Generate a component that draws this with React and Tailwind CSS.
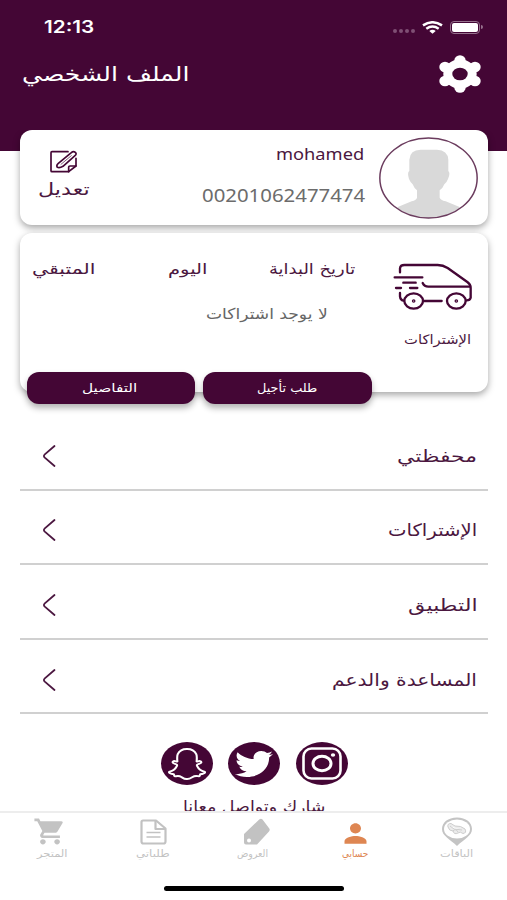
import { useLayoutEffect, useRef, useState } from 'react'
import { FaSnapchatGhost, FaTwitter } from 'react-icons/fa'
import { MdPerson, MdShoppingCart } from 'react-icons/md'

const menu = [
  { label: 'محفظتي', width: 80 },
  { label: 'الإشتراكات', width: 89 },
  { label: 'التطبيق', width: 69 },
  { label: 'المساعدة والدعم', width: 145 },
]

// Single line of text stretched to a given width
function Line({ width, className = '', children }) {
  const ref = useRef(null)
  const [scale, setScale] = useState(1)

  useLayoutEffect(() => {
    setScale(width / ref.current.offsetWidth)
  }, [width])

  return (
    <span className={`block shrink-0 ${className}`} style={{ width }} dir="ltr">
      <span ref={ref} className="inline-block whitespace-nowrap origin-left" style={{ transform: `scaleX(${scale})` }}>
        {children}
      </span>
    </span>
  )
}

function StatusBar() {
  return (
    <div className="flex items-center justify-between pl-11 pr-[24px] h-[54px]" dir="ltr">
      <Line width={50} className="font-['Inter'] font-semibold text-[17px] leading-5">12:13</Line>
      <div className="flex items-center">
        <div className="flex gap-[2px] mt-2 mr-[7px]">
          {[0, 1, 2, 3].map((i) => (
            <i key={i} className="w-1 h-1 rounded-full bg-[#7f5074]" />
          ))}
        </div>
        <svg className="w-[21px] h-[13px] mr-[7px]" viewBox="0 0 21 13" preserveAspectRatio="none" fill="none" stroke="#fff" strokeWidth="2.5">
          <path d="M1 4.4Q10.500 -1.900 20 4.400" />
          <path d="M4.300 7.700Q10.500 3.400 16.700 7.700" />
          <path d="M7.300 10Q10.500 7.700 13.700 10L10.500 12.700Z" fill="#fff" stroke="none" />
        </svg>
        <div className="w-[30px] h-[13px] rounded-[4px] border border-[#96718d] p-px">
          <div className="w-full h-full rounded-[2px] bg-white" />
        </div>
        <i className="w-[2px] h-1 ml-px rounded-r-full bg-[#96718d]" />
      </div>
    </div>
  )
}

function GearIcon() {
  return (
    <svg className="w-[42px] h-[38px]" viewBox="0 0 42 38" fill="#fff">
      <ellipse cx="21" cy="19" rx="16.700" ry="14.500" />
      <ellipse cx="21" cy="5.500" rx="5.700" ry="5.200" />
      <ellipse cx="21" cy="32.500" rx="5.700" ry="5.200" />
      <ellipse cx="6" cy="12" rx="5.700" ry="5.200" />
      <ellipse cx="36" cy="12" rx="5.700" ry="5.200" />
      <ellipse cx="6" cy="26" rx="5.700" ry="5.200" />
      <ellipse cx="36" cy="26" rx="5.700" ry="5.200" />
      <ellipse cx="21" cy="19" rx="7.700" ry="6.300" fill="#440635" />
    </svg>
  )
}

function EditIcon() {
  return (
    <svg className="w-[27px] h-[23px]" viewBox="0 0 81 69" fill="none" stroke="#440635" strokeWidth="5" strokeLinejoin="round" strokeLinecap="round">
      <path d="M54 5H6Q3 5 3 8V62Q3 65 6 65H56L78 48V25" />
      <path d="M56 65V51Q56 48 60 48H78" />
      <path d="M64 8Q70 2 76 7Q81 12 75 17L39 49Q29 55 22 52Q18 46 25 40Z" />
      <path d="M33 43L64 17" strokeWidth="2" />
    </svg>
  )
}

function Avatar() {
  return (
    <svg className="w-[99px] h-[82px]" viewBox="0 0 297 246">
      <defs>
        <clipPath id="face">
          <ellipse cx="148.500" cy="123" rx="145" ry="119" />
        </clipPath>
      </defs>
      <ellipse cx="148.500" cy="123" rx="146" ry="120" fill="#fff" />
      <path clipPath="url(#face)" fill="#d9d9d9" d="M91 68Q93 38 125 38H174Q206 39 208 68V102Q215 108 207 126Q203 137 196 142Q191 155 182 160V182Q184 189 200 193L240 209L260 246H35L58 209L98 193Q113 189 114 182V160Q105 153 101 142Q94 136 90 126Q84 106 91 102Z" />
      <ellipse cx="148.500" cy="123" rx="146" ry="120" fill="none" stroke="#6b3c5e" strokeWidth="4.500" />
    </svg>
  )
}

function VanIcon() {
  return (
    <svg className="w-[80px] h-[48px]" viewBox="422 98 240 144" fill="none" stroke="#440635" strokeWidth="7" strokeLinecap="round" strokeLinejoin="round">
      <path d="M443 126V114Q444 104 456 104H556Q572 104 586 113L645 155Q655 162 655 172V202Q653 210 643 210" />
      <path d="M427 141H510M453 157H490M431 173H446M473 173H495" />
      <path d="M511 158Q516 169 528 169H653" />
      <path d="M443 188V198Q444 210 455 211M514 212H568" />
      <ellipse cx="484" cy="212" rx="28" ry="23" />
      <ellipse cx="612" cy="212" rx="28" ry="23" />
      <circle cx="484" cy="212" r="2" />
      <circle cx="612" cy="212" r="2" />
    </svg>
  )
}

function Chevron() {
  return (
    <svg className="w-[14px] h-[24px]" viewBox="0 0 14 24" fill="none" stroke="#4b1740" strokeWidth="1.800" strokeLinecap="round">
      <path d="M12.500 2L2.800 10.300Q1 12 2.800 13.700L12.500 22" />
    </svg>
  )
}

function InstagramIcon() {
  return (
    <svg className="w-[40px] h-[33px]" viewBox="0 0 40 33" fill="none" stroke="#fff">
      <rect x="1.500" y="1.500" width="37" height="30" rx="8" strokeWidth="2.600" />
      <ellipse cx="20" cy="16.500" rx="9" ry="7.300" strokeWidth="3" />
      <ellipse cx="31" cy="8" rx="2.200" ry="1.800" fill="#fff" stroke="none" />
    </svg>
  )
}

function TagIcon() {
  return (
    <svg className="w-[26px] h-[28px]" viewBox="0 0 26 28" fill="#c2c2c2">
      <path fillRule="evenodd" d="M15.500 1.300Q17 0 18.500 1.500L25.300 10.500Q26.300 12 25 13.500L13 26.500H2Q0 26.500 0 24.500V16ZM5 20.500A2 2 0 1 0 5 24.500A2 2 0 1 0 5 20.500Z" />
    </svg>
  )
}

function DocIcon() {
  return (
    <svg className="w-[27px] h-[26px]" viewBox="0 0 27 26" fill="none" stroke="#c2c2c2" strokeWidth="2.200" strokeLinejoin="round">
      <path d="M3 1.500H16L25.500 9.500V22.500Q25.500 24.500 23.500 24.500H3.500Q1.500 24.500 1.500 22.500V3Q1.500 1.500 3 1.500Z" />
      <path d="M15.500 2V10H25" />
      <path d="M6.500 13.500H20.500M6.500 18H20.500" strokeWidth="1.300" />
    </svg>
  )
}

function PinIcon() {
  return (
    <svg className="w-[32px] h-[30px]" viewBox="0 0 32 30">
      <path d="M16 0.500C7 0.500 1 5.500 1 12C1 19 9 22 16 29C23 22 31 19 31 12C31 5.500 25 .500 16 .500Z" fill="#c4c4c4" />
      <ellipse cx="16" cy="12" rx="13" ry="9.600" fill="#fff" />
      <path d="M7 10Q6 6.500 10 6.500L14 9Q20 8.500 24 12Q26 16 22 16.500Q19 14 17 16Q13 18 12 14Q8 14 7 10ZM9 9L13 12L21 13M12 14Q15 11 17 15" fill="#ececec" stroke="#cdcdcd" strokeWidth="1" />
    </svg>
  )
}

function Tab({ icon, label, width, active, className = '', labelClass = '' }) {
  return (
    <div className={`flex flex-col items-center ${active ? 'text-[#de8652]' : 'text-[#c3c3c3]'} ${className}`}>
      <div className="h-[31px] flex items-center justify-center">{icon}</div>
      <Line width={width} className={`text-[10px] leading-[14px] ${labelClass}`}>{label}</Line>
    </div>
  )
}

export default function App() {
  return (
    <div dir="rtl" className="w-[507px] h-[900px] flex flex-col overflow-hidden bg-white text-[#4b1740] font-['DejaVu_Sans',sans-serif]">
      <header className="h-[151px] shrink-0 bg-[#440635] text-white">
        <StatusBar />
        <div className="flex items-center justify-between h-10 pr-[26px] pl-[22px]">
          <GearIcon />
          <Line width={167} className="text-[20px] leading-8">الملف الشخصي</Line>
        </div>
      </header>

      <main className="relative flex-1 min-h-0 overflow-hidden -mt-[21px] px-5 pr-[19px]">
        {/* Profile */}
        <section className="flex h-[95px] rounded-[12px] bg-white shadow-[0_3px_7px_rgba(0,0,0,0.35)] pr-[10px] pl-[18px]">
          <div className="pt-[7px]"><Avatar /></div>
          <div className="flex-1 flex flex-col pr-[15px] pt-[12px] gap-[17px]">
            <Line width={88} className="font-['Noto_Sans'] text-[17px] leading-6">mohamed</Line>
            <Line width={163} className="font-['Noto_Sans'] text-[18px] leading-6 mr-[-1px] text-[#6c6c6c]">00201062477474</Line>
          </div>
          <div className="flex flex-col items-center pt-5">
            <EditIcon />
            <Line width={51} className="text-[17px] leading-6 mt-[4px]">تعديل</Line>
          </div>
        </section>

        {/* Subscription */}
        <section className="relative h-[159px] mt-2 rounded-[12px] bg-white shadow-[0_3px_7px_rgba(0,0,0,0.35)] flex">
          <div className="w-[108px] pr-[15px] pt-[30px]">
            <VanIcon />
            <Line width={67} className="text-[13px] leading-5 mt-[19px] mr-[2px]">الإشتراكات</Line>
          </div>
          <div className="flex-1 pt-[24px] pr-[25px] pl-[12px]">
            <div className="flex text-[15px] leading-6">
              <Line width={86}>تاريخ البداية</Line>
              <Line width={39} className="mr-[62px]">اليوم</Line>
              <Line width={64} className="mr-[72px]">المتبقي</Line>
            </div>
            <Line width={122} className="text-[15px] leading-6 mt-[21px] mr-[27px] text-[#666]">لا يوجد اشتراكات</Line>
          </div>
          <div className="absolute left-[7px] top-[139px] flex gap-2 text-white text-[12px] leading-5">
            <button className="w-[169px] h-8 rounded-[12px] bg-[#440635] shadow-[0_4px_6px_rgba(0,0,0,0.3)] flex items-center justify-center pr-1">
              <Line width={60}>طلب تأجيل</Line>
            </button>
            <button className="w-[168px] h-8 rounded-[12px] bg-[#440635] shadow-[0_4px_6px_rgba(0,0,0,0.3)] flex items-center justify-center pr-[14px]">
              <Line width={55}>التفاصيل</Line>
            </button>
          </div>
        </section>

        {/* Menu */}
        <nav className="mt-[24px]">
          {menu.map((item) => (
            <div key={item.label} className="h-[74.600px] pt-[7px] border-b-2 border-[#d0d0d0] flex items-center justify-between pr-[11px] pl-[22px]">
              <Line width={item.width} className="text-[17px] leading-7">{item.label}</Line>
              <Chevron />
            </div>
          ))}
        </nav>

        {/* Social links */}
        <div className="flex justify-center gap-[15.500px] mt-7">
          <a className="w-[52px] h-[43px] rounded-[50%] bg-[#440635] flex items-center justify-center"><InstagramIcon /></a>
          <a className="w-[52px] h-[43px] rounded-[50%] bg-[#440635] flex items-center justify-center">
            <FaTwitter className="w-[38px] h-[32px] text-white" preserveAspectRatio="none" />
          </a>
          <a className="w-[52px] h-[43px] rounded-[50%] bg-[#440635] flex items-center justify-center">
            <FaSnapchatGhost className="w-[36px] h-[32px] fill-none stroke-white stroke-[30] overflow-visible" preserveAspectRatio="none" />
          </a>
        </div>
        <Line width={142} className="mx-auto text-[16px] leading-6 mt-[10px]">شارك وتواصل معانا</Line>
      </main>

      <footer className="h-[89px] shrink-0 border-t-2 border-[#ededed] bg-white">
        <div className="flex h-[73px] pt-[3px]">
          <Tab className="w-[101px]" icon={<PinIcon />} label="الباقات" width={33} />
          <Tab className="w-[102px]" icon={<MdPerson className="w-[33px] h-[31px] mt-1" preserveAspectRatio="none" />} label="حسابي" width={26} active />
          <Tab className="w-[94px]" icon={<TagIcon />} label="العروض" width={31} labelClass="mr-[10px]" />
          <Tab className="w-[114px]" icon={<DocIcon />} label="طلباتي" width={33} labelClass="mr-[2px]" />
          <Tab className="w-[92px]" icon={<MdShoppingCart className="w-[34px] h-[31px]" preserveAspectRatio="none" />} label="المتجر" width={31} labelClass="mr-[-4px]" />
        </div>
        <div className="w-[180px] h-[5px] mx-auto rounded-full bg-black" />
      </footer>
    </div>
  )
}
